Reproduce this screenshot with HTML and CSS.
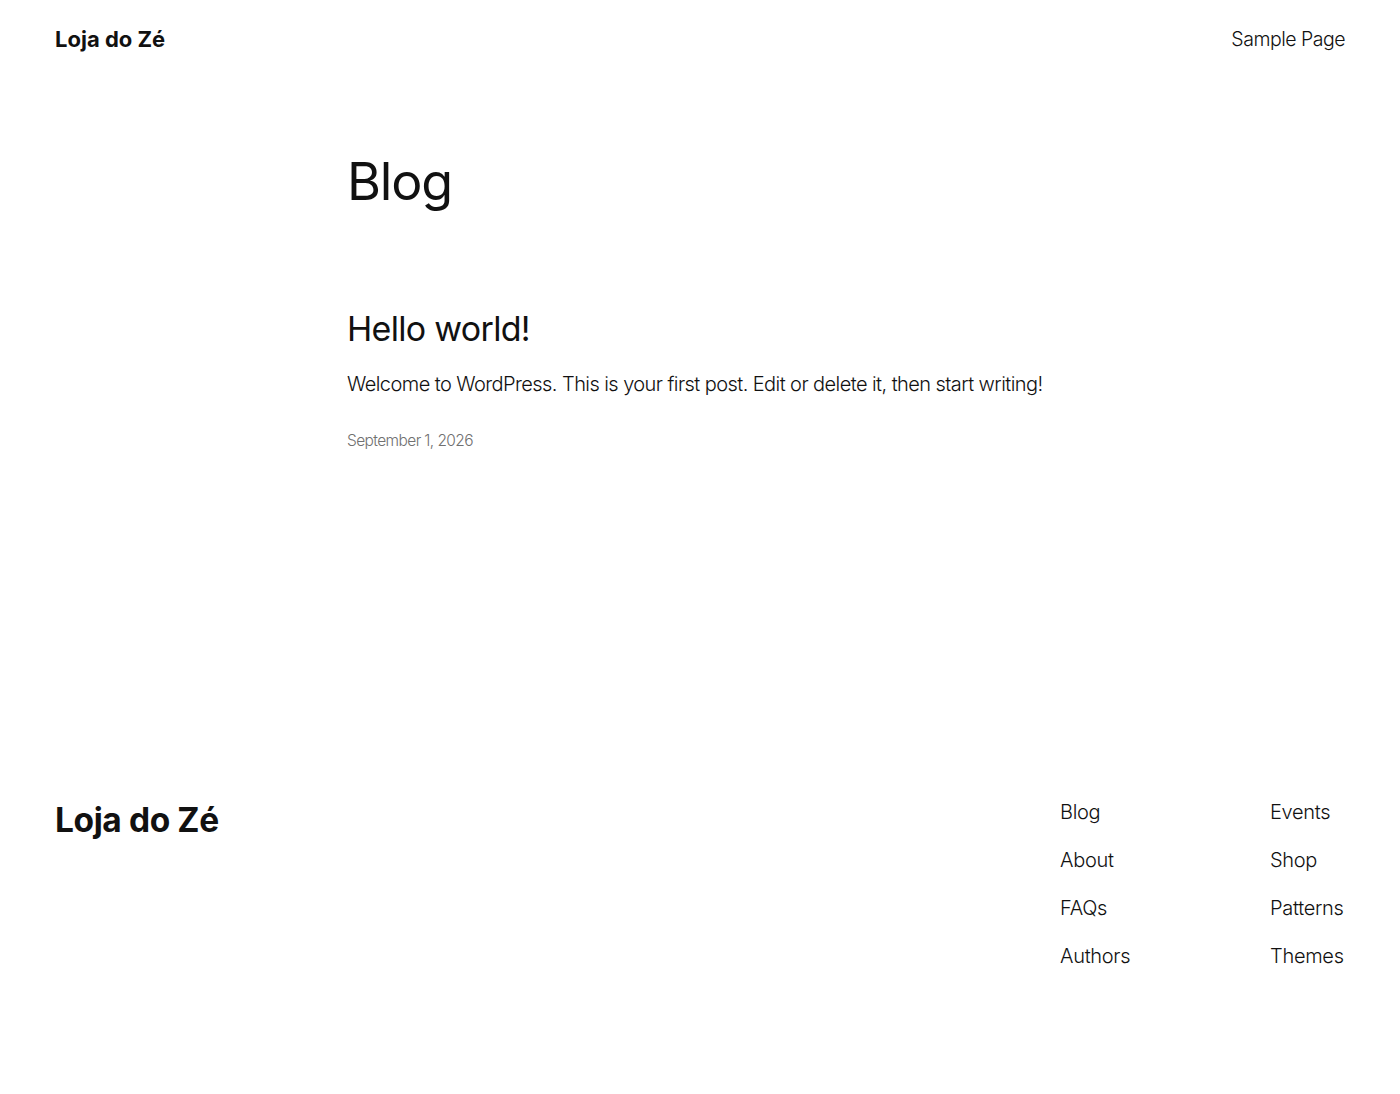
FILE: index.html
```html
<!DOCTYPE html>
<html lang="pt">
<head>
<meta charset="utf-8">
<title>Blog – Loja do Zé</title>
<link rel="stylesheet" href="styles.css">
</head>
<body>
<header class="site-header">
  <a class="site-title" href="#">Loja do Zé</a>
  <nav class="main-nav"><a href="#">Sample Page</a></nav>
</header>
<main class="site-main">
  <h1 class="page-title">Blog</h1>
  <article class="post">
    <h2 class="post-title"><a href="#">Hello world!</a></h2>
    <p class="post-excerpt">Welcome to WordPress. This is your first post. Edit or delete it, then start writing!</p>
    <time class="post-date">September 1, 2026</time>
  </article>
</main>
<footer class="site-footer">
  <a class="footer-title" href="#">Loja do Zé</a>
  <div class="footer-navs">
    <ul class="footer-col col-a">
      <li><a href="#">Blog</a></li>
      <li><a href="#">About</a></li>
      <li><a href="#">FAQs</a></li>
      <li><a href="#">Authors</a></li>
    </ul>
    <ul class="footer-col col-b">
      <li><a href="#">Events</a></li>
      <li><a href="#">Shop</a></li>
      <li><a href="#">Patterns</a></li>
      <li><a href="#">Themes</a></li>
    </ul>
  </div>
</footer>
</body>
</html>
```
FILE: styles.css
```css
* { box-sizing: border-box; }
html, body { margin: 0; padding: 0; background: #ffffff; }
body {
  font-family: Inter, "Noto Sans", sans-serif;
  font-weight: 300;
  color: #111111;
  letter-spacing: -0.1px;
}
a { color: inherit; text-decoration: none; }

.site-header {
  height: 78px;
  padding: 0 55px;
  display: flex;
  align-items: center;
  justify-content: space-between;
}
.site-title {
  font-size: 22px;
  font-weight: 700;
  letter-spacing: 0;
}
.main-nav {
  font-size: 19.5px;
  letter-spacing: -0.5px;
}

.site-main {
  width: 706px;
  margin: 0 auto;
  padding-top: 73px;
}
.page-title {
  margin: 0;
  font-size: 52px;
  line-height: 1.2;
  font-weight: 400;
  letter-spacing: -1.2px;
}
.post { margin-top: 96px; }
.post-title {
  margin: 0;
  font-size: 34px;
  line-height: 1.2;
  font-weight: 400;
  letter-spacing: -0.7px;
}
.post-excerpt {
  margin: 19px 0 0;
  font-size: 20px;
  line-height: 1.5;
  letter-spacing: -0.57px;
  white-space: nowrap;
}
.post-date {
  display: block;
  margin-top: 30px;
  font-size: 15.5px;
  line-height: 1.5;
  letter-spacing: -0.6px;
  color: #707070;
}

.site-footer {
  margin-top: 345px;
  padding: 0 55px;
  display: flex;
  justify-content: space-between;
  align-items: flex-start;
}
.footer-title {
  padding-top: 3px;
  font-size: 33.5px;
  font-weight: 700;
  line-height: 1.2;
  letter-spacing: -0.4px;
}
.footer-navs { display: flex; }
.footer-col {
  list-style: none;
  margin: 0;
  padding: 0;
  display: flex;
  flex-direction: column;
  gap: 18px;
  font-size: 20px;
  line-height: 30px;
  letter-spacing: -0.3px;
  white-space: nowrap;
}
.col-a { width: 210px; }
.col-b { width: 75px; }
```
